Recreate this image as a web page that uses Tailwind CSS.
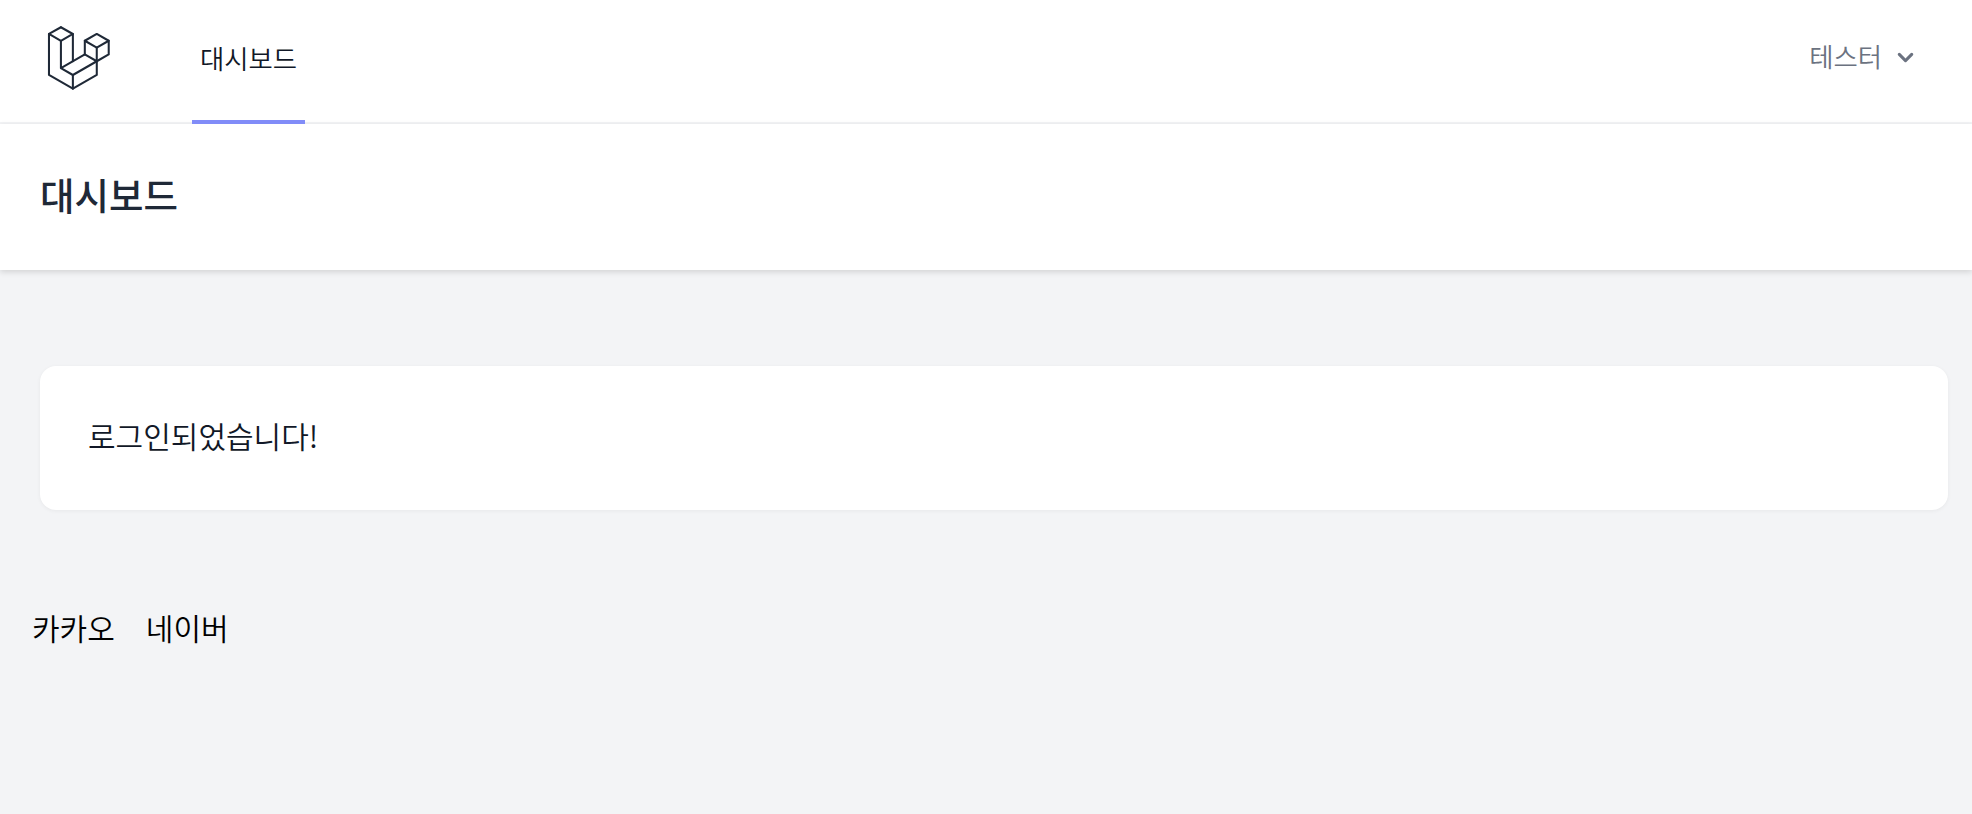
<!DOCTYPE html>
<html lang="ko">
<head>
    <meta charset="UTF-8">
    <title>대시보드</title>
    <script src="https://cdn.jsdelivr.net/npm/@tailwindcss/browser@4"></script>
</head>
<body class="min-h-screen bg-[#f3f4f6] text-black font-['Noto_Sans_CJK_KR','Noto_Sans',sans-serif]">
    <nav class="flex justify-between h-[124px] pl-10 pr-[51px] bg-white border-b-2 border-[#f3f4f6]">
        <div class="flex">
            <a href="#" class="flex items-center">
                <svg viewBox="0 0 316 316" class="w-[72px] h-[72px] -mt-[7px] text-[#1f2937]" fill="none" stroke="currentColor" stroke-width="9" stroke-linejoin="round" stroke-linecap="round">
                    <path d="M91.8 23L39.4 52.5V232.2L144.3 292.6L249.2 232.2V172.3"/>
                    <path d="M91.8 23L144.3 52.6L91.8 82.8L39.4 52.5"/>
                    <path d="M144.3 52.6V172.3"/>
                    <path d="M91.8 82.8V202.5L196.7 142.2L249.2 172.3L144.3 232.6L91.8 202.5"/>
                    <path d="M144.3 232.6V292.6"/>
                    <path d="M249.1 52.3L196.7 82.3L249.1 112.5L301.6 82.3Z"/>
                    <path d="M196.7 82.3V142.2"/>
                    <path d="M249.1 112.5V172.3"/>
                    <path d="M301.6 82.3V142.2L249.2 172.3"/>
                </svg>
            </a>
            <a href="#" class="flex items-center h-[124px] ml-[80px] px-[8px] pb-[5px] border-b-4 border-[#818cf8] text-[26.4px] font-[350] text-[#111827]">대시보드</a>
        </div>
        <button class="flex items-center self-center -mt-[6px] text-[#6b7280] text-[26.4px] font-[350]">
            <span class="pb-[4px]">테스터</span>
            <svg viewBox="0 0 20 20" fill="currentColor" class="w-[31px] h-[31px] ml-[8px]">
                <path fill-rule="evenodd" clip-rule="evenodd" d="M5.293 7.293a1 1 0 011.414 0L10 10.586l3.293-3.293a1 1 0 111.414 1.414l-4 4a1 1 0 01-1.414 0l-4-4a1 1 0 010-1.414z"/>
            </svg>
        </button>
    </nav>

    <header class="flex items-center h-[146px] pl-10 pb-[6px] bg-white shadow-[0_2px_6px_rgba(0,0,0,0.14)]">
        <h2 class="text-[37.5px] font-medium text-[#1f2937]">대시보드</h2>
    </header>

    <main class="pt-24">
        <div class="flex items-center h-[144px] ml-10 mr-6 pl-12 pb-[5px] bg-white rounded-2xl shadow-[0_1px_4px_rgba(0,0,0,0.05)] text-[30px] font-[350] text-[#111827]">
            로그인되었습니다!
        </div>
        <div class="flex gap-[31px] mt-[95px] pl-8 text-[30px] font-[350]">
            <a href="#">카카오</a>
            <a href="#">네이버</a>
        </div>
    </main>
</body>
</html>
